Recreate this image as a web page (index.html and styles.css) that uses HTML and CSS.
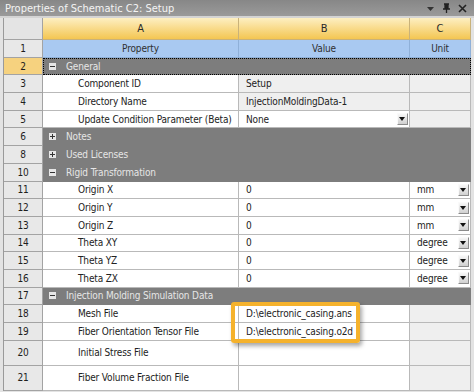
FILE: index.html
```html
<!DOCTYPE html>
<html lang="en">
<head>
    <meta charset="UTF-8">
    <title>Properties of Schematic C2: Setup</title>
    <link rel="stylesheet" href="styles.css">
</head>
<body>
    <div class="panel">
        <div class="titlebar">
            <span class="title">Properties of Schematic C2: Setup</span>
            <div class="tools">
                <svg width="9" height="9" viewBox="0 0 9 9"><path d="M1 3h7L4.5 7z" fill="#333"/></svg>
                <svg width="9" height="11" viewBox="0 0 9 11"><path d="M2 1h5M3 1v5M6 1v5M1 6h7M4.5 6v4" stroke="#222" stroke-width="1.3" fill="none"/><path d="M3 1h3v5H3z" fill="#222"/></svg>
                <svg width="9" height="9" viewBox="0 0 9 9"><path d="M1 1l7 7M8 1L1 8" stroke="#222" stroke-width="1.6"/></svg>
            </div>
        </div>

        <div class="sheet">
            <div class="row head">
                <div class="num"></div>
                <div class="cell center">A</div>
                <div class="cell center">B</div>
                <div class="cell center">C</div>
            </div>
            <div class="row cap">
                <div class="num">1</div>
                <div class="cell center">Property</div>
                <div class="cell center">Value</div>
                <div class="cell center">Unit</div>
            </div>
            <div class="row group selected">
                <div class="num">2</div>
                <div class="cell span"><i class="tog minus"></i>General</div>
            </div>
            <div class="row">
                <div class="num">3</div>
                <div class="cell prop">Component ID</div>
                <div class="cell ro">Setup</div>
                <div class="cell ro"></div>
            </div>
            <div class="row">
                <div class="num">4</div>
                <div class="cell prop">Directory Name</div>
                <div class="cell ro">InjectionMoldingData-1</div>
                <div class="cell ro"></div>
            </div>
            <div class="row">
                <div class="num">5</div>
                <div class="cell prop">Update Condition Parameter (Beta)</div>
                <div class="cell drop">None<span class="btn"></span></div>
                <div class="cell ro"></div>
            </div>
            <div class="row group">
                <div class="num">6</div>
                <div class="cell span"><i class="tog plus"></i>Notes</div>
            </div>
            <div class="row group">
                <div class="num">8</div>
                <div class="cell span"><i class="tog plus"></i>Used Licenses</div>
            </div>
            <div class="row group">
                <div class="num">10</div>
                <div class="cell span"><i class="tog minus"></i>Rigid Transformation</div>
            </div>
            <div class="row">
                <div class="num">11</div>
                <div class="cell prop">Origin X</div>
                <div class="cell">0</div>
                <div class="cell drop">mm<span class="btn"></span></div>
            </div>
            <div class="row">
                <div class="num">12</div>
                <div class="cell prop">Origin Y</div>
                <div class="cell">0</div>
                <div class="cell drop">mm<span class="btn"></span></div>
            </div>
            <div class="row">
                <div class="num">13</div>
                <div class="cell prop">Origin Z</div>
                <div class="cell">0</div>
                <div class="cell drop">mm<span class="btn"></span></div>
            </div>
            <div class="row">
                <div class="num">14</div>
                <div class="cell prop">Theta XY</div>
                <div class="cell">0</div>
                <div class="cell drop">degree<span class="btn"></span></div>
            </div>
            <div class="row">
                <div class="num">15</div>
                <div class="cell prop">Theta YZ</div>
                <div class="cell">0</div>
                <div class="cell drop">degree<span class="btn"></span></div>
            </div>
            <div class="row">
                <div class="num">16</div>
                <div class="cell prop">Theta ZX</div>
                <div class="cell">0</div>
                <div class="cell drop">degree<span class="btn"></span></div>
            </div>
            <div class="row group">
                <div class="num">17</div>
                <div class="cell span"><i class="tog minus"></i>Injection Molding Simulation Data</div>
            </div>
            <div class="row">
                <div class="num">18</div>
                <div class="cell prop">Mesh File</div>
                <div class="cell">D:\electronic_casing.ans</div>
                <div class="cell ro"></div>
            </div>
            <div class="row">
                <div class="num">19</div>
                <div class="cell prop">Fiber Orientation Tensor File</div>
                <div class="cell">D:\electronic_casing.o2d</div>
                <div class="cell ro"></div>
            </div>
            <div class="row tall">
                <div class="num">20</div>
                <div class="cell prop">Initial Stress File</div>
                <div class="cell"></div>
                <div class="cell ro"></div>
            </div>
            <div class="row tall">
                <div class="num">21</div>
                <div class="cell prop">Fiber Volume Fraction File</div>
                <div class="cell"></div>
                <div class="cell ro"></div>
            </div>

            <div class="mark"></div>
        </div>
    </div>
</body>
</html>
```

FILE: styles.css
```css
html, body { margin: 0; padding: 0; }
body {
    width: 474px;
    height: 392px;
    overflow: hidden;
    background: #e3e3e3;
    font-family: "DejaVu Sans Condensed", "DejaVu Sans", sans-serif;
    font-stretch: condensed;
    font-size: 10px;
    color: #222;
}

.titlebar {
    height: 16px;
    background: linear-gradient(#878787, #9a9a9a);
    display: flex;
    align-items: center;
    justify-content: space-between;
    padding: 0 5px;
    border-bottom: 2px solid #d4d4d4;
}
.title { color: #f4f4f4; font-size: 11px; }
.tools { display: flex; align-items: center; gap: 7px; padding-right: 2px; }
.tools svg { display: block; }

.sheet {
    position: relative;
    margin-left: 3px;
    width: 468px;
    border-left: 1px solid #9a9a9a;
    letter-spacing: -0.15px;
}

.row {
    display: grid;
    grid-template-columns: 39px 196px 171px 61px;
    height: 17.7px;
}
.row.head { height: 22px; }
.row.tall { height: 25px; }

.num, .cell {
    box-sizing: border-box;
    display: flex;
    align-items: center;
    border-right: 1px solid #b9b9b9;
    border-bottom: 1px solid #b9b9b9;
    white-space: nowrap;
    overflow: hidden;
}
.num {
    justify-content: center;
    background: #e8e8e8;
    border-color: #a3a3a3;
    color: #1e1e1e;
}
.cell { background: #fff; padding-left: 7px; }
.cell.center { justify-content: center; padding-left: 0; }
.cell.prop { padding-left: 35px; }
.cell.ro { background: #efefef; }

.head .cell {
    background: linear-gradient(#fdefc2, #f4c652);
    border-color: #c9b27a;
    color: #2a2a2a;
    font-size: 11px;
}
.head .num { background: #e4e4e4; }
.cap .cell { background: #a9c9f1; border-color: #8fb0d8; color: #303030; }

.group .cell { background: #7d7d7d; color: #e6e6e6; border-color: #7d7d7d; padding-left: 6px; }
.group .span { grid-column: 2 / 5; }
.selected .num { background: #f6d27f; }
.selected .span { outline: 1px dotted #000; outline-offset: -1px; }

.tog {
    box-sizing: border-box;
    width: 7px;
    height: 7px;
    margin-right: 10px;
    background: #e6e6e6;
    position: relative;
}
.tog::before {
    content: "";
    position: absolute;
    left: 1px; top: 3px;
    width: 5px; height: 1px;
    background: #333;
}
.tog.plus::after {
    content: "";
    position: absolute;
    left: 3px; top: 1px;
    width: 1px; height: 5px;
    background: #333;
}

.drop { justify-content: space-between; padding-right: 1px; }
.btn {
    box-sizing: border-box;
    width: 11px;
    height: 12px;
    background: linear-gradient(#f7f7f7, #d0d0d0);
    border: 1px solid;
    border-color: #fafafa #8c8c8c #8c8c8c #fafafa;
    position: relative;
}
.btn::after {
    content: "";
    position: absolute;
    left: 1px; top: 3px;
    border-left: 3.5px solid transparent;
    border-right: 3.5px solid transparent;
    border-top: 4px solid #111;
}

.mark {
    position: absolute;
    left: 227px;
    top: 284px;
    width: 129px;
    height: 41px;
    box-sizing: border-box;
    border: 4px solid #f5b22c;
    border-radius: 3px;
    box-shadow: 2px 3px 4px rgba(0, 0, 0, 0.35);
    pointer-events: none;
}
```
